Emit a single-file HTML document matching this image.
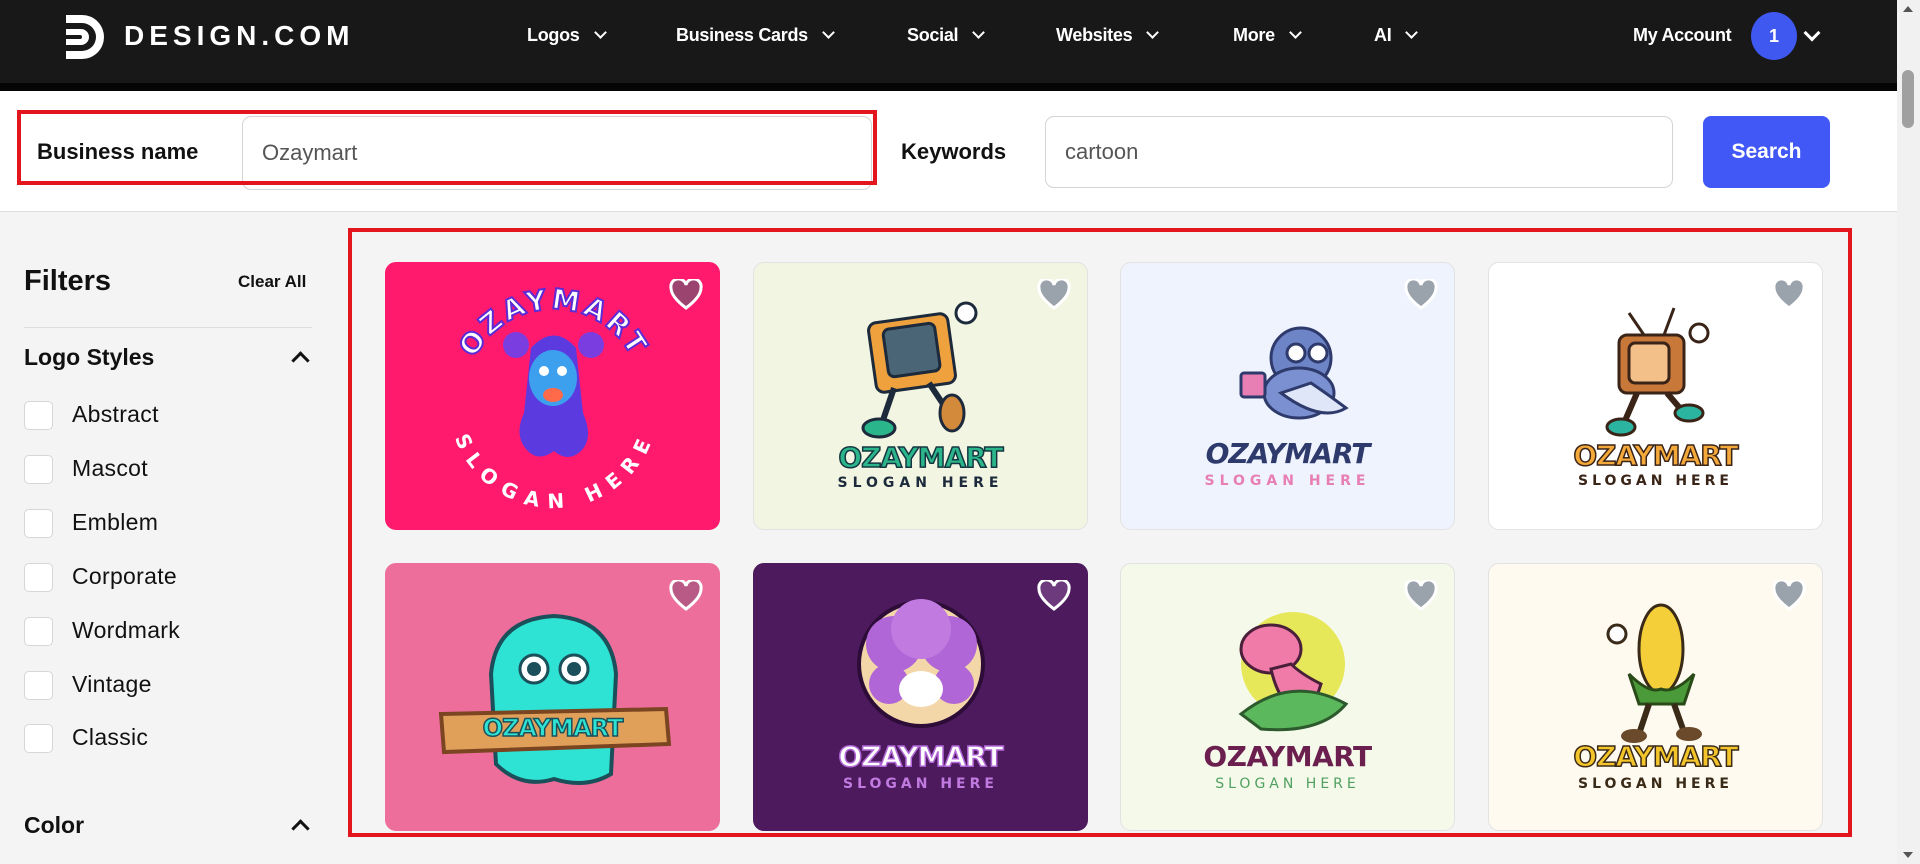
<!DOCTYPE html>
<html><head><meta charset="utf-8">
<style>
*{box-sizing:border-box;margin:0;padding:0}
body{width:1920px;height:864px;overflow:hidden;background:#f4f4f4;font-family:"Liberation Sans",Arial,sans-serif;position:relative;color:#111}
.nav{position:absolute;left:0;top:0;width:1897px;height:83px;background:#181818}
.navstrip{position:absolute;left:0;top:83px;width:1897px;height:8px;background:#050505}
.nav .it{position:absolute;top:25px;color:#fff;font-weight:700;font-size:18px;letter-spacing:-0.3px}
.chev{display:inline-block;width:9px;height:9px;border-right:2.2px solid #fff;border-bottom:2.2px solid #fff;transform:rotate(45deg);margin-left:16px;position:relative;top:-4px}
.search{position:absolute;left:0;top:91px;width:1897px;height:121px;background:#fff;border-bottom:1px solid #ddd}
.lbl{position:absolute;font-weight:700;font-size:22px;color:#111}
.inp{position:absolute;background:#fff;border:1px solid #d4d4d4;border-radius:9px;font-size:22px;color:#555;padding-left:19px;display:flex;align-items:center}
.btn{position:absolute;left:1703px;top:116px;width:127px;height:72px;background:#4158f6;border-radius:8px;color:#fff;font-weight:700;font-size:21px;display:flex;align-items:center;justify-content:center}
.red{position:absolute;border:4px solid #e3161e}
.scroll{position:absolute;left:1897px;top:0;width:23px;height:864px;background:#f1f1f1}
.thumb{position:absolute;left:1902px;top:70px;width:12px;height:58px;background:#a0a0a0;border-radius:6px}
.side .t{position:absolute;font-weight:700}
.cb{position:absolute;left:24px;width:29px;height:29px;border:1px solid #d6d6d6;border-radius:5px;background:#fff}
.cl{position:absolute;left:72px;font-size:23px;color:#111;letter-spacing:0.3px}
.up{position:absolute;width:13px;height:13px;border-left:3px solid #111;border-top:3px solid #111;transform:rotate(45deg)}
.card{position:absolute;width:335px;height:268px;border-radius:11px;border:1px solid #e2e2e2;overflow:hidden}
.heart{position:absolute;right:16px;top:16px;width:34px;height:32px}
.wm{position:absolute;left:0;width:100%;text-align:center;font-weight:900;font-family:"DejaVu Sans","Liberation Sans",sans-serif}
</style></head><body>
<div class="nav">
 <svg style="position:absolute;left:62px;top:12px" width="46" height="50" viewBox="0 0 46 50"><path d="M4 3 H20 A22 22 0 0 1 20 47 H4 V39 H20 A14 14 0 0 0 20 11 H4 Z" fill="#fff"/><path d="M4 17 H19 A8 8 0 0 1 19 33 H4 V27 H18 A2 2 0 0 0 18 23 H4 Z" fill="#fff"/></svg>
 <div style="position:absolute;left:124px;top:20px;color:#fff;font-size:28px;font-weight:700;letter-spacing:5px">DESIGN.COM</div>
 <div class="it" style="left:527px">Logos<span class="chev"></span></div>
 <div class="it" style="left:676px">Business Cards<span class="chev"></span></div>
 <div class="it" style="left:907px">Social<span class="chev"></span></div>
 <div class="it" style="left:1056px">Websites<span class="chev"></span></div>
 <div class="it" style="left:1233px">More<span class="chev"></span></div>
 <div class="it" style="left:1374px">AI<span class="chev"></span></div>
 <div class="it" style="left:1633px">My Account</div>
 <div style="position:absolute;left:1751px;top:12px;width:46px;height:48px;border-radius:50%;background:#3f58f0;color:#fff;font-weight:700;font-size:18px;display:flex;align-items:center;justify-content:center">1</div>
 <span class="chev" style="position:absolute;left:1806px;top:27px;margin:0;width:12px;height:12px;border-width:3px"></span>
</div>
<div class="navstrip"></div>
<div class="search">
 <div class="lbl" style="left:37px;top:48px">Business name</div>
 <div class="inp" style="left:242px;top:25px;width:630px;height:74px">Ozaymart</div>
 <div class="lbl" style="left:901px;top:48px">Keywords</div>
 <div class="inp" style="left:1045px;top:25px;width:628px;height:72px">cartoon</div>
</div>
<div class="btn">Search</div>
<div class="red" style="left:17px;top:110px;width:860px;height:75px"></div>
<div class="side">
 <div class="t" style="left:24px;top:265px;font-size:29px">Filters</div>
 <div class="t" style="left:238px;top:272px;font-size:17px">Clear All</div>
 <div style="position:absolute;left:24px;top:327px;width:288px;height:1px;background:#ddd"></div>
 <div class="t" style="left:24px;top:344px;font-size:23px">Logo Styles</div>
 <div class="up" style="left:294px;top:354px"></div>
 <div class="cb" style="top:401px"></div><div class="cl" style="top:401px">Abstract</div>
 <div class="cb" style="top:455px"></div><div class="cl" style="top:455px">Mascot</div>
 <div class="cb" style="top:509px"></div><div class="cl" style="top:509px">Emblem</div>
 <div class="cb" style="top:563px"></div><div class="cl" style="top:563px">Corporate</div>
 <div class="cb" style="top:617px"></div><div class="cl" style="top:617px">Wordmark</div>
 <div class="cb" style="top:671px"></div><div class="cl" style="top:671px">Vintage</div>
 <div class="cb" style="top:724px"></div><div class="cl" style="top:724px">Classic</div>
 <div class="t" style="left:24px;top:812px;font-size:23px">Color</div>
 <div class="up" style="left:294px;top:822px"></div>
</div>

<!-- card 1 -->
<div class="card" style="left:385px;top:262px;background:#ff1a6e;border-color:#ff1a6e">
 <svg width="335" height="268" style="position:absolute;left:0;top:0">
  <defs><path id="a1" d="M80 125 A88 88 0 0 1 255 125"/><path id="a2" d="M78 140 A90 90 0 0 0 258 140"/></defs>
  <path d="M145 85 Q168 60 190 85 L197 150 Q208 175 195 188 Q182 200 168 188 Q152 200 140 186 Q128 172 138 150 Z" fill="#5b3be0"/>
  <ellipse cx="167" cy="115" rx="24" ry="28" fill="#3da0ee"/>
  <circle cx="130" cy="82" r="13" fill="#7a3ee0"/><circle cx="205" cy="82" r="13" fill="#7a3ee0"/>
  <circle cx="158" cy="108" r="5" fill="#fff"/><circle cx="176" cy="108" r="5" fill="#fff"/>
  <ellipse cx="167" cy="132" rx="10" ry="7" fill="#ff6a4a"/>
  <text font-family="DejaVu Sans" font-weight="900" font-size="28" fill="#fff" stroke="#5a2bd6" stroke-width="2" letter-spacing="3"><textPath href="#a1" startOffset="50%" text-anchor="middle">OZAYMART</textPath></text>
  <text font-family="DejaVu Sans" font-weight="900" font-size="20" fill="#fff" letter-spacing="6" dominant-baseline="hanging"><textPath href="#a2" startOffset="50%" text-anchor="middle">SLOGAN HERE</textPath></text>
 </svg>
 <svg class="heart" viewBox="0 0 34 32"><path d="M17 29 C5 20 2 14 2 9 A7.5 7.5 0 0 1 17 6 A7.5 7.5 0 0 1 32 9 C32 14 29 20 17 29Z" fill="#9c4470" stroke="#fff" stroke-width="3"/></svg>
</div>
<!-- card 2 -->
<div class="card" style="left:753px;top:262px;background:#f1f5e1">
 <svg width="335" height="268" style="position:absolute;left:0;top:0">
  <rect x="118" y="55" width="80" height="70" rx="8" fill="#eea13c" stroke="#1c2a3c" stroke-width="3" transform="rotate(-8 158 90)"/>
  <rect x="132" y="63" width="52" height="48" rx="6" fill="#4a6575" stroke="#1c2a3c" stroke-width="3" transform="rotate(-8 158 90)"/>
  <path d="M140 125 L128 160 M175 120 L195 150" stroke="#1c2a3c" stroke-width="6"/>
  <ellipse cx="125" cy="165" rx="16" ry="9" fill="#2bb58a" stroke="#1c2a3c" stroke-width="3"/>
  <ellipse cx="198" cy="150" rx="12" ry="18" fill="#d38a3a" stroke="#1c2a3c" stroke-width="3"/>
  <circle cx="212" cy="50" r="10" fill="#fff" stroke="#1c2a3c" stroke-width="3"/>
 </svg>
 <div class="wm" style="top:178px;font-size:28px;color:#2bb58a;-webkit-text-stroke:1.5px #153540;letter-spacing:-1px">OZAYMART</div>
 <div class="wm" style="top:212px;font-size:14px;color:#1c2a3c;letter-spacing:5px">SLOGAN HERE</div>
 <svg class="heart" viewBox="0 0 34 32"><path d="M17 29 C5 20 2 14 2 9 A7.5 7.5 0 0 1 17 6 A7.5 7.5 0 0 1 32 9 C32 14 29 20 17 29Z" fill="#9aa3ab" stroke="#fff" stroke-width="3"/></svg>
</div>
<!-- card 3 -->
<div class="card" style="left:1120px;top:262px;background:#eef3fd">
 <svg width="335" height="268" style="position:absolute;left:0;top:0">
  <ellipse cx="180" cy="95" rx="30" ry="30" fill="#6d84c6" stroke="#2e3a6b" stroke-width="3"/>
  <ellipse cx="178" cy="130" rx="35" ry="25" fill="#7a90d0" stroke="#2e3a6b" stroke-width="3"/>
  <path d="M160 130 Q200 160 225 145 Q205 130 190 120Z" fill="#dfe6f7" stroke="#2e3a6b" stroke-width="3"/>
  <rect x="120" y="110" width="24" height="24" rx="3" fill="#e77fb5" stroke="#2e3a6b" stroke-width="3"/>
  <circle cx="175" cy="90" r="9" fill="#fff" stroke="#2e3a6b" stroke-width="3"/><circle cx="197" cy="90" r="9" fill="#fff" stroke="#2e3a6b" stroke-width="3"/>
 </svg>
 <div class="wm" style="top:174px;font-size:28px;color:#2e3a6b;font-style:italic;letter-spacing:-1px">OZAYMART</div>
 <div class="wm" style="top:210px;font-size:14px;color:#e77fb5;letter-spacing:5px">SLOGAN HERE</div>
 <svg class="heart" viewBox="0 0 34 32"><path d="M17 29 C5 20 2 14 2 9 A7.5 7.5 0 0 1 17 6 A7.5 7.5 0 0 1 32 9 C32 14 29 20 17 29Z" fill="#9aa3ab" stroke="#fff" stroke-width="3"/></svg>
</div>
<!-- card 4 -->
<div class="card" style="left:1488px;top:262px;background:#fff">
 <svg width="335" height="268" style="position:absolute;left:0;top:0">
  <path d="M140 50 L155 72 M175 72 L185 45" stroke="#3a2418" stroke-width="3"/>
  <rect x="130" y="72" width="65" height="58" rx="8" fill="#c8793a" stroke="#3a2418" stroke-width="3"/>
  <rect x="140" y="80" width="40" height="40" rx="6" fill="#f3c08a" stroke="#3a2418" stroke-width="3"/>
  <path d="M148 130 L135 160 M178 130 L195 150" stroke="#3a2418" stroke-width="6"/>
  <ellipse cx="132" cy="164" rx="14" ry="8" fill="#2bb5a0" stroke="#3a2418" stroke-width="3"/>
  <ellipse cx="200" cy="150" rx="14" ry="8" fill="#2bb5a0" stroke="#3a2418" stroke-width="3"/>
  <circle cx="210" cy="70" r="9" fill="#fff" stroke="#3a2418" stroke-width="3"/>
 </svg>
 <div class="wm" style="top:176px;font-size:28px;color:#f4a93a;-webkit-text-stroke:1.5px #3a2418;letter-spacing:-1px">OZAYMART</div>
 <div class="wm" style="top:210px;font-size:14px;color:#3a2418;letter-spacing:4px">SLOGAN HERE</div>
 <svg class="heart" viewBox="0 0 34 32"><path d="M17 29 C5 20 2 14 2 9 A7.5 7.5 0 0 1 17 6 A7.5 7.5 0 0 1 32 9 C32 14 29 20 17 29Z" fill="#9aa3ab" stroke="#fff" stroke-width="3"/></svg>
</div>
<!-- card 5 -->
<div class="card" style="left:385px;top:563px;background:#ee6e9b;border-color:#ee6e9b">
 <svg width="335" height="268" style="position:absolute;left:0;top:0">
  <path d="M110 200 L105 110 Q110 55 168 52 Q225 55 230 110 L225 210 Q200 225 168 215 Q135 225 110 200Z" fill="#2ee3d3" stroke="#1b4f5a" stroke-width="4"/>
  <circle cx="148" cy="105" r="14" fill="#fff" stroke="#1b4f5a" stroke-width="3"/><circle cx="188" cy="105" r="14" fill="#fff" stroke="#1b4f5a" stroke-width="3"/>
  <circle cx="148" cy="105" r="7" fill="#1b4f5a"/><circle cx="188" cy="105" r="7" fill="#1b4f5a"/>
  <path d="M55 150 L280 145 L283 180 L58 188Z" fill="#e0a05a" stroke="#7a4520" stroke-width="4"/>
 </svg>
 <div class="wm" style="top:150px;font-size:24px;color:#2ee3d3;-webkit-text-stroke:1.5px #1b4f5a;letter-spacing:-1px">OZAYMART</div>
 <svg class="heart" viewBox="0 0 34 32"><path d="M17 29 C5 20 2 14 2 9 A7.5 7.5 0 0 1 17 6 A7.5 7.5 0 0 1 32 9 C32 14 29 20 17 29Z" fill="#b85a85" stroke="#fff" stroke-width="3"/></svg>
</div>
<!-- card 6 -->
<div class="card" style="left:753px;top:563px;background:#4e1a5e;border-color:#4e1a5e">
 <svg width="335" height="268" style="position:absolute;left:0;top:0">
  <circle cx="167" cy="100" r="62" fill="#f3d7a8" stroke="#2d0c38" stroke-width="4"/>
  <circle cx="140" cy="80" r="28" fill="#b066d6"/><circle cx="195" cy="80" r="28" fill="#b066d6"/><circle cx="167" cy="65" r="30" fill="#c07ae0"/>
  <circle cx="135" cy="120" r="20" fill="#b066d6"/><circle cx="200" cy="120" r="20" fill="#b066d6"/>
  <ellipse cx="167" cy="125" rx="22" ry="18" fill="#fff"/>
 </svg>
 <div class="wm" style="top:176px;font-size:28px;color:#fff;-webkit-text-stroke:1.5px #b066d6;letter-spacing:-1px">OZAYMART</div>
 <div class="wm" style="top:212px;font-size:14px;color:#c07ae0;letter-spacing:4px">SLOGAN HERE</div>
 <svg class="heart" viewBox="0 0 34 32"><path d="M17 29 C5 20 2 14 2 9 A7.5 7.5 0 0 1 17 6 A7.5 7.5 0 0 1 32 9 C32 14 29 20 17 29Z" fill="#6e3a7e" stroke="#fff" stroke-width="3"/></svg>
</div>
<!-- card 7 -->
<div class="card" style="left:1120px;top:563px;background:#f5f9ea">
 <svg width="335" height="268" style="position:absolute;left:0;top:0">
  <circle cx="172" cy="100" r="52" fill="#e6e85a"/>
  <ellipse cx="150" cy="85" rx="30" ry="24" fill="#f07aa8" stroke="#4a1f3a" stroke-width="3"/>
  <path d="M150 105 Q160 150 190 150 L200 120 Q180 110 170 100Z" fill="#f07aa8" stroke="#4a1f3a" stroke-width="3"/>
  <path d="M120 150 Q170 110 225 140 Q200 170 140 165Z" fill="#5cb85c" stroke="#2d5a2d" stroke-width="3"/>
 </svg>
 <div class="wm" style="top:176px;font-size:28px;color:#6b1f4f;letter-spacing:-0.5px">OZAYMART</div>
 <div class="wm" style="top:212px;font-size:14px;color:#4fa060;letter-spacing:4px;font-weight:400">SLOGAN HERE</div>
 <svg class="heart" viewBox="0 0 34 32"><path d="M17 29 C5 20 2 14 2 9 A7.5 7.5 0 0 1 17 6 A7.5 7.5 0 0 1 32 9 C32 14 29 20 17 29Z" fill="#9aa3ab" stroke="#fff" stroke-width="3"/></svg>
</div>
<!-- card 8 -->
<div class="card" style="left:1488px;top:563px;background:#fffaf0">
 <svg width="335" height="268" style="position:absolute;left:0;top:0">
  <ellipse cx="172" cy="85" rx="22" ry="44" fill="#f4cf3a" stroke="#3a2a18" stroke-width="3"/>
  <path d="M140 110 Q160 130 172 125 Q185 130 205 110 L195 140 L150 140Z" fill="#4a9a3a" stroke="#2a4a18" stroke-width="3"/>
  <path d="M160 140 L150 170 M185 140 L195 168" stroke="#3a2a18" stroke-width="6"/>
  <ellipse cx="145" cy="172" rx="13" ry="7" fill="#6a4a2a"/><ellipse cx="200" cy="170" rx="13" ry="7" fill="#6a4a2a"/>
  <circle cx="128" cy="70" r="9" fill="#fff" stroke="#3a2a18" stroke-width="3"/>
 </svg>
 <div class="wm" style="top:176px;font-size:28px;color:#f4c52a;-webkit-text-stroke:1.5px #3a2a18;letter-spacing:-1px">OZAYMART</div>
 <div class="wm" style="top:212px;font-size:14px;color:#3a2a18;letter-spacing:4px">SLOGAN HERE</div>
 <svg class="heart" viewBox="0 0 34 32"><path d="M17 29 C5 20 2 14 2 9 A7.5 7.5 0 0 1 17 6 A7.5 7.5 0 0 1 32 9 C32 14 29 20 17 29Z" fill="#9aa3ab" stroke="#fff" stroke-width="3"/></svg>
</div>

<div class="red" style="left:348px;top:228px;width:1504px;height:609px"></div>
<div class="scroll"></div><div class="thumb"></div>
<div style="position:absolute;left:1903px;top:6px;width:0;height:0;border-left:5px solid transparent;border-right:5px solid transparent;border-bottom:6px solid #555"></div>
<div style="position:absolute;left:1903px;top:852px;width:0;height:0;border-left:5px solid transparent;border-right:5px solid transparent;border-top:6px solid #555"></div>
</body></html>
